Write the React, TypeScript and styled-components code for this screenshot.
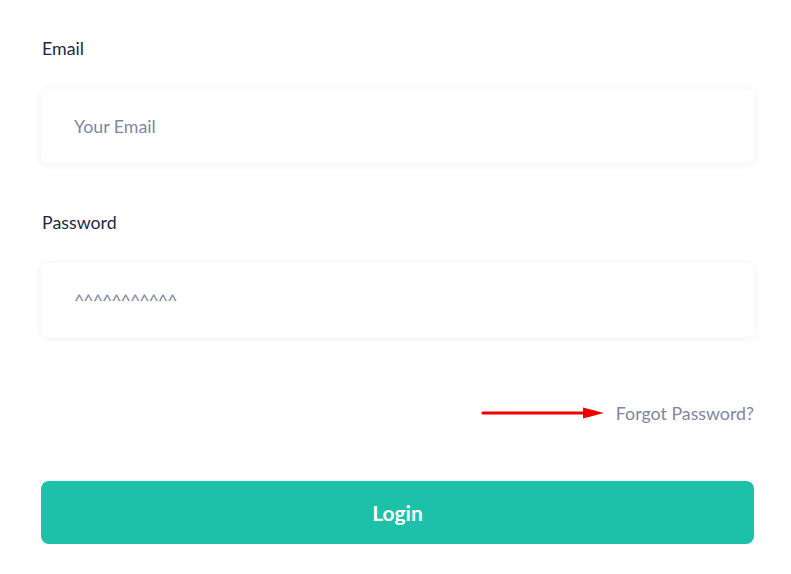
import React from "react";
import styled, { createGlobalStyle } from "styled-components";

const Global = createGlobalStyle`
  html, body { margin: 0; padding: 0; background: #ffffff; }
  body { font-family: "Lato", "Noto Sans", sans-serif; }
`;

const Form = styled.form`
  display: flex;
  flex-direction: column;
  padding: 36px 37px 0 41px;
`;

const Label = styled.label`
  font-size: 17.8px;
  line-height: 24px;
  color: #1d2746;
  margin-left: 1px;
  margin-bottom: 29px;
`;

const Input = styled.input<{ $mb?: number; $tight?: boolean }>`
  box-sizing: border-box;
  height: 74px;
  width: 100%;
  border: none;
  outline: none;
  border-radius: 6px;
  background: #ffffff;
  box-shadow: 0 1px 8px rgba(30, 40, 80, 0.07);
  padding: 0 33px;
  font-family: inherit;
  font-size: 17.8px;
  color: #1d2746;
  margin-bottom: ${(p) => p.$mb ?? 0}px;
  letter-spacing: ${(p) => (p.$tight ? "-1px" : "normal")};
  &::placeholder { color: #7f86a3; }
`;

const ForgotRow = styled.div`
  display: flex;
  justify-content: flex-end;
  align-items: center;
  gap: 11px;
  margin-top: 64px;
  height: 24px;
`;

const ForgotLink = styled.a`
  font-size: 17.8px;
  line-height: 24px;
  color: #7f86a3;
  text-decoration: none;
  cursor: pointer;
`;

const Button = styled.button`
  margin-top: 56px;
  height: 63px;
  border: none;
  border-radius: 8px;
  background: #1dc0a8;
  color: #ffffff;
  font-family: inherit;
  font-weight: 700;
  font-size: 21px;
  cursor: pointer;
`;

const Arrow = () => (
  <svg width="124" height="14" viewBox="0 0 124 14">
    <line x1="2" y1="7" x2="106" y2="7" stroke="#f00000" strokeWidth="3.2" strokeLinecap="round" />
    <polygon points="102,1.5 123,7 102,12.5" fill="#f00000" />
  </svg>
);

export default function App() {
  return (
    <>
      <Global />
      <Form onSubmit={(e) => e.preventDefault()}>
        <Label>Email</Label>
        <Input type="email" placeholder="Your Email" $mb={47} />
        <Label>Password</Label>
        <Input type="text" placeholder="^^^^^^^^^^^" $tight />
        <ForgotRow>
          <Arrow />
          <ForgotLink>Forgot Password?</ForgotLink>
        </ForgotRow>
        <Button type="submit">Login</Button>
      </Form>
    </>
  );
}
